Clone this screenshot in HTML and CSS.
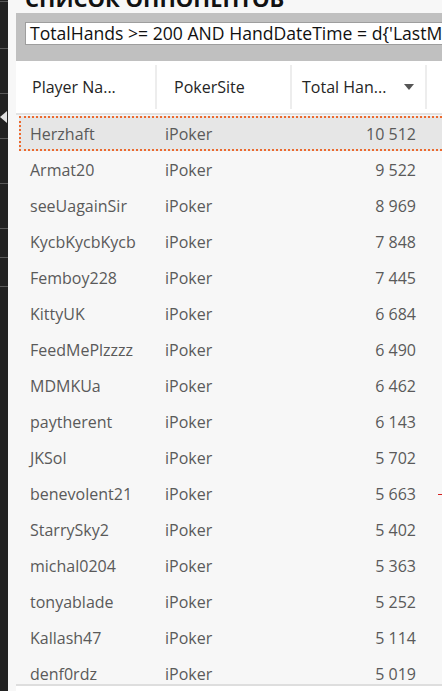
FILE: index.html
```html
<!DOCTYPE html>
<html lang="ru">
<head>
<meta charset="utf-8">
<title>Список оппонентов</title>
<link rel="stylesheet" href="styles.css">
</head>
<body>
<div class="rail">
  <div class="seg seg-first"></div>
  <div class="seg"></div>
  <div class="seg seg-arrow"><span class="arrow"></span></div>
  <div class="seg"></div>
  <div class="seg"></div>
  <div class="seg seg-short"></div>
  <div class="seg seg-short"></div>
  <div class="seg seg-last"></div>
</div>
<div class="main">
  <div class="title"><span class="title-text">СПИСОК ОППОНЕНТОВ</span></div>
  <div class="filter-bar">
    <div class="filter-input">TotalHands &gt;= 200 AND HandDateTime = d{'LastMonth'}</div>
  </div>
  <div class="table">
    <div class="head">
      <div class="hcell c1">Player Na...</div>
      <div class="hcell c2">PokerSite</div>
      <div class="hcell c3">Total Han... <span class="sort"></span></div>
      <div class="hcell c4"></div>
    </div>
    <div class="body">
      <div class="row selected"><span class="name">Herzhaft</span><span class="site">iPoker</span><span class="num">10 512</span></div>
      <div class="row"><span class="name">Armat20</span><span class="site">iPoker</span><span class="num">9 522</span></div>
      <div class="row"><span class="name">seeUagainSir</span><span class="site">iPoker</span><span class="num">8 969</span></div>
      <div class="row"><span class="name">KycbKycbKycb</span><span class="site">iPoker</span><span class="num">7 848</span></div>
      <div class="row"><span class="name">Femboy228</span><span class="site">iPoker</span><span class="num">7 445</span></div>
      <div class="row"><span class="name">KittyUK</span><span class="site">iPoker</span><span class="num">6 684</span></div>
      <div class="row"><span class="name">FeedMePlzzzz</span><span class="site">iPoker</span><span class="num">6 490</span></div>
      <div class="row"><span class="name">MDMKUa</span><span class="site">iPoker</span><span class="num">6 462</span></div>
      <div class="row"><span class="name">paytherent</span><span class="site">iPoker</span><span class="num">6 143</span></div>
      <div class="row"><span class="name">JKSol</span><span class="site">iPoker</span><span class="num">5 702</span></div>
      <div class="row"><span class="name">benevolent21</span><span class="site">iPoker</span><span class="num">5 663</span><span class="mark"></span></div>
      <div class="row"><span class="name">StarrySky2</span><span class="site">iPoker</span><span class="num">5 402</span></div>
      <div class="row"><span class="name">michal0204</span><span class="site">iPoker</span><span class="num">5 363</span></div>
      <div class="row"><span class="name">tonyablade</span><span class="site">iPoker</span><span class="num">5 252</span></div>
      <div class="row"><span class="name">Kallash47</span><span class="site">iPoker</span><span class="num">5 114</span></div>
      <div class="row"><span class="name">denf0rdz</span><span class="site">iPoker</span><span class="num">5 019</span></div>
    </div>
    <div class="hscroll"></div>
  </div>
</div>
</body>
</html>
```
FILE: styles.css
```css
html, body {
  margin: 0;
  padding: 0;
}
body {
  width: 442px;
  height: 691px;
  overflow: hidden;
  display: flex;
  background: #f7f7f7;
  font-family: "Open Sans", "Noto Sans", sans-serif;
}
.rail {
  width: 8px;
  flex: none;
  background: #222222;
  display: flex;
  flex-direction: column;
}
.seg {
  height: 45px;
  flex: none;
  border-top: 1px solid #5a5a5a;
  box-sizing: border-box;
  position: relative;
}
.seg-first {
  height: 47px;
  margin-top: 1px;
}
.seg-short {
  height: 29px;
}
.seg-last {
  height: 10px;
}
.arrow {
  position: absolute;
  left: 0;
  top: 17px;
  width: 0;
  height: 0;
  border-top: 6px solid transparent;
  border-bottom: 6px solid transparent;
  border-right: 7px solid #e0e0e0;
}
.main {
  flex: 1;
  min-width: 0;
  padding-left: 8px;
  display: flex;
  flex-direction: column;
  overflow: hidden;
}
.title {
  height: 13px;
  flex: none;
  overflow: hidden;
  padding-left: 9px;
  font-weight: 700;
  font-size: 22px;
  color: #111;
  white-space: nowrap;
}
.title-text {
  display: block;
  line-height: 22px;
  margin-top: -13px;
}
.filter-bar {
  height: 48px;
  flex: none;
  background: #c0c0c0;
  padding: 9px 0 0 9px;
  box-sizing: border-box;
}
.filter-input {
  height: 23px;
  box-sizing: border-box;
  background: #ffffff;
  border: 1px solid #9e9e9e;
  border-right: none;
  padding-left: 4px;
  font-size: 17.6px;
  line-height: 21px;
  color: #111;
  white-space: nowrap;
  overflow: hidden;
}
.table {
  flex: 1;
  display: flex;
  flex-direction: column;
  min-height: 0;
}
.head {
  height: 52px;
  flex: none;
  background: #ffffff;
  display: flex;
  align-items: center;
  border-bottom: 2px solid #e2e2e2;
}
.hcell {
  height: 44px;
  display: flex;
  align-items: center;
  box-sizing: border-box;
  font-size: 16px;
  color: #252525;
  white-space: nowrap;
  border-right: 2px solid #ededed;
}
.c1 { width: 141px; padding-left: 16px; }
.c2 { width: 135px; padding-left: 17px; }
.c3 { width: 135px; padding-left: 10px; }
.c4 { flex: 1; border-right: none; }
.sort {
  margin-left: 18px;
  width: 0;
  height: 0;
  border-left: 5px solid transparent;
  border-right: 5px solid transparent;
  border-top: 6px solid #555;
}
.body {
  flex: 1;
  min-height: 0;
  overflow: hidden;
  padding-top: 1px;
}
.row {
  height: 36px;
  display: flex;
  align-items: center;
  font-size: 16px;
  color: #5a5a5a;
  white-space: nowrap;
  position: relative;
  box-sizing: border-box;
}
.row.selected {
  margin-left: 3px;
  background: #e6e6e6;
  border: 2px dotted #ec6a2f;
  border-right: none;
  height: 35px;
  margin-bottom: 1px;
}
.name { width: 149px; padding-left: 14px; box-sizing: border-box; }
.site { width: 130px; }
.num { width: 121px; text-align: right; }
.row.selected .name { padding-left: 9px; width: 144px; }
.mark {
  position: absolute;
  right: 0;
  top: 18px;
  width: 4px;
  height: 1px;
  background: #d32020;
}
.hscroll {
  height: 2px;
  flex: none;
  background: #dedede;
}
.table::after {
  content: "";
  display: block;
  height: 5px;
  flex: none;
  background: #ffffff;
}
```
